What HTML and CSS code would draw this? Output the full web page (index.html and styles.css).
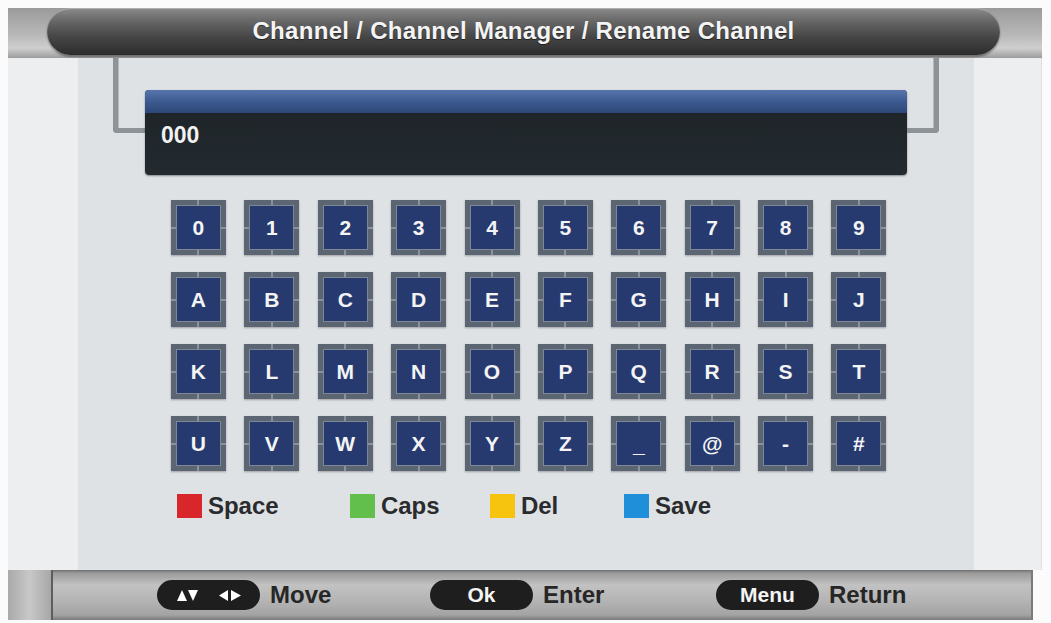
FILE: index.html
```html
<!DOCTYPE html>
<html lang="en">
<head>
<meta charset="utf-8">
<title>Rename Channel</title>
<link rel="stylesheet" href="styles.css">
</head>
<body>
<div class="tv">
  <header class="titlebar">
    <div class="title-pill">Channel / Channel Manager / Rename Channel</div>
  </header>
  <div class="stage">
    <div class="side side-l"></div>
    <main class="panel">
      <div class="input-row">
        <div class="bracket bracket-l"></div>
        <div class="input-box">
          <div class="input-top"></div>
          <div class="input-text">000</div>
        </div>
        <div class="bracket bracket-r"></div>
      </div>
      <div class="keys">
        <div class="key"><span>0</span></div><div class="key"><span>1</span></div><div class="key"><span>2</span></div><div class="key"><span>3</span></div><div class="key"><span>4</span></div><div class="key"><span>5</span></div><div class="key"><span>6</span></div><div class="key"><span>7</span></div><div class="key"><span>8</span></div><div class="key"><span>9</span></div>
        <div class="key"><span>A</span></div><div class="key"><span>B</span></div><div class="key"><span>C</span></div><div class="key"><span>D</span></div><div class="key"><span>E</span></div><div class="key"><span>F</span></div><div class="key"><span>G</span></div><div class="key"><span>H</span></div><div class="key"><span>I</span></div><div class="key"><span>J</span></div>
        <div class="key"><span>K</span></div><div class="key"><span>L</span></div><div class="key"><span>M</span></div><div class="key"><span>N</span></div><div class="key"><span>O</span></div><div class="key"><span>P</span></div><div class="key"><span>Q</span></div><div class="key"><span>R</span></div><div class="key"><span>S</span></div><div class="key"><span>T</span></div>
        <div class="key"><span>U</span></div><div class="key"><span>V</span></div><div class="key"><span>W</span></div><div class="key"><span>X</span></div><div class="key"><span>Y</span></div><div class="key"><span>Z</span></div><div class="key"><span class="low">_</span></div><div class="key"><span>@</span></div><div class="key"><span>-</span></div><div class="key"><span>#</span></div>
      </div>
      <div class="legend">
        <div class="legend-item"><i class="sw sw-red"></i><span>Space</span></div>
        <div class="legend-item"><i class="sw sw-green"></i><span>Caps</span></div>
        <div class="legend-item"><i class="sw sw-yellow"></i><span>Del</span></div>
        <div class="legend-item"><i class="sw sw-blue"></i><span>Save</span></div>
      </div>
    </main>
    <div class="side side-r"></div>
  </div>
  <footer class="footer">
    <div class="cap"></div>
    <div class="hints">
      <div class="hint">
        <div class="pill pill-arrows">
          <svg width="65" height="13" viewBox="0 0 65 13">
            <polygon points="0,12 5,1 10,12" fill="#fff"/>
            <polygon points="11,1 21,1 16,12" fill="#fff"/>
            <polygon points="42,6.5 51,1 51,12" fill="#fff"/>
            <polygon points="54,1 54,12 64,6.5" fill="#fff"/>
          </svg>
        </div>
        <span class="hint-text">Move</span>
      </div>
      <div class="hint">
        <div class="pill">Ok</div>
        <span class="hint-text">Enter</span>
      </div>
      <div class="hint">
        <div class="pill">Menu</div>
        <span class="hint-text">Return</span>
      </div>
    </div>
  </footer>
</div>
</body>
</html>
```

FILE: styles.css
```css
html, body {
  margin: 0;
  padding: 0;
  background: #fbfbfb;
}

body {
  font-family: "Liberation Sans", Arial, sans-serif;
  font-weight: bold;
}

.tv {
  padding: 8px 0 0 8px;
  width: 1034px;
}

/* ---------- title ---------- */
.titlebar {
  height: 50px;
  background: linear-gradient(#9a9a9a 0%, #b9b9b9 55%, #cfcfcf 80%, #9c9c9c 100%);
  display: flex;
  align-items: flex-start;
}

.title-pill {
  margin-left: 39px;
  width: 953px;
  height: 47px;
  border-radius: 24px;
  background: linear-gradient(#8c8c8c 0%, #6a6a6a 25%, #474747 60%, #2c2c2c 100%);
  box-shadow: 0 2px 2px rgba(0,0,0,0.35), inset 0 1px 1px rgba(255,255,255,0.35);
  color: #f4f4f4;
  font-size: 24px;
  letter-spacing: 0.3px;
  display: flex;
  align-items: center;
  justify-content: center;
  padding-bottom: 2px;
  box-sizing: border-box;
  text-shadow: 0 1px 1px rgba(0,0,0,0.5);
}

/* ---------- stage ---------- */
.stage {
  display: flex;
  height: 512px;
}

.side {
  background: #eceef0;
}

.side-l {
  width: 70px;
}

.side-r {
  width: 67px;
  border-right: 1px dotted #d2d5d8;
}

.panel {
  width: 897px;
  background: #dfe2e5;
}

/* ---------- input ---------- */
.input-row {
  margin: 0 35px;
  display: grid;
  grid-template-columns: 32px 1fr 32px;
  align-items: start;
}

.bracket {
  height: 70px;
  border-bottom: 5px solid #8e9398;
  box-sizing: content-box;
}

.bracket-l {
  border-left: 5px solid #8e9398;
  border-bottom-left-radius: 4px;
  box-shadow: inset 1px 0 0 #b5b9bd;
}

.bracket-r {
  border-right: 5px solid #8e9398;
  border-bottom-right-radius: 4px;
  box-shadow: inset -1px 0 0 #b5b9bd;
}

.input-box {
  margin-top: 32px;
  height: 85px;
  border-radius: 4px;
  overflow: hidden;
  background: linear-gradient(#1c2226, #242b30);
  box-shadow: 0 1px 2px rgba(0,0,0,0.4);
}

.input-top {
  height: 23px;
  background: linear-gradient(#5876ad 0%, #3f5d93 45%, #2c4677 100%);
}

.input-text {
  color: #f2f2f2;
  font-size: 23px;
  padding: 11px 0 0 16px;
  line-height: 23px;
}

/* ---------- keys ---------- */
.keys {
  margin-top: 25px;
  padding-left: 93px;
  display: grid;
  grid-template-columns: repeat(10, 55px);
  grid-auto-rows: 55px;
  column-gap: 18.4px;
  row-gap: 17px;
}

.key {
  background:
    linear-gradient(#8a929c, #8a929c) center top / 2px 5px no-repeat,
    linear-gradient(#8a929c, #8a929c) center bottom / 2px 5px no-repeat,
    linear-gradient(#8a929c, #8a929c) left center / 5px 2px no-repeat,
    linear-gradient(#8a929c, #8a929c) right center / 5px 2px no-repeat,
    #5c6572;
  padding: 6px;
  box-sizing: border-box;
  box-shadow: 0 1px 2px rgba(0,0,0,0.3);
  display: flex;
}

.key span {
  flex: 1;
  background: #263a70;
  box-shadow: 0 0 0 1px #7e8795;
  color: #f4f4f4;
  font-size: 21px;
  display: flex;
  align-items: center;
  justify-content: center;
}

.key span.low {
  align-items: flex-end;
  padding-bottom: 8px;
}

/* ---------- legend ---------- */
.legend {
  margin-top: 21px;
  padding-left: 99px;
  display: grid;
  grid-template-columns: 173px 140px 134px auto;
}

.legend-item {
  display: flex;
  align-items: center;
  gap: 6px;
}

.sw {
  display: block;
  width: 25px;
  height: 24px;
}

.sw-red { background: #d9262a; }
.sw-green { background: #62bf4c; }
.sw-yellow { background: #f6c40e; }
.sw-blue { background: #1e8fd8; }

.legend-item span {
  font-size: 24px;
  color: #2a2b2d;
}

/* ---------- footer ---------- */
.footer {
  width: 1025px;
  height: 50px;
  display: flex;
  background: linear-gradient(#6f6f6f 0%, #9a9a9a 6%, #c2c2c2 30%, #b5b5b5 60%, #a3a3a3 90%, #7a7a7a 100%);
  box-sizing: border-box;
  border-right: 2px solid #7a7a7a;
}

.cap {
  width: 43px;
  border-right: 2px solid #5d5d5d;
  background: linear-gradient(90deg, #a9a9a9, #c8c8c8 50%, #a7a7a7);
}

.hints {
  padding-left: 104px;
  display: grid;
  grid-template-columns: 273px 286px auto;
  align-items: center;
}

.hint {
  display: flex;
  align-items: center;
}

.pill {
  width: 103px;
  height: 30px;
  border-radius: 15px;
  background: #1e1e1e;
  color: #f4f4f4;
  font-size: 21px;
  display: flex;
  align-items: center;
  justify-content: center;
}

.pill-arrows svg {
  display: block;
  margin-left: 2px;
}

.hint-text {
  margin-left: 10px;
  font-size: 24px;
  color: #262626;
}
```
